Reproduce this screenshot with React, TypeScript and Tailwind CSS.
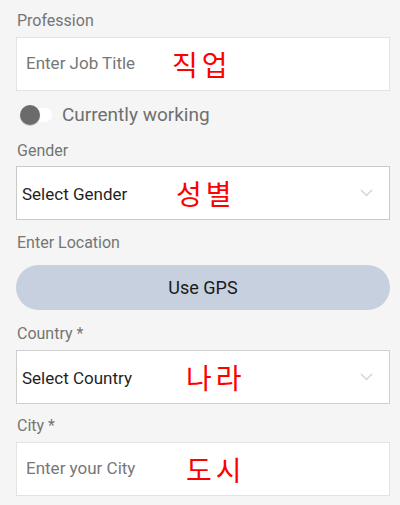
import React, { useState } from 'react';

const Label: React.FC<{ text: string; className?: string }> = ({ text, className = '' }) => (
  <p className={`text-[16px] leading-5 text-[#757575] pl-px ${className}`}>{text}</p>
);

const Note: React.FC<{ text: string; left: string }> = ({ text, left }) => (
  <span
    className={`absolute top-1/2 -translate-y-1/2 ${left} text-[28px] leading-none tracking-[4px] text-[#ff0000]`}
    style={{ fontFamily: '"Noto Sans CJK KR", sans-serif' }}
  >
    {text}
  </span>
);

const Chevron = () => (
  <svg className="absolute right-[16px] top-1/2 -translate-y-1/2" width="13" height="8" viewBox="0 0 13 8" fill="none">
    <polyline points="1,1 6.5,6.5 12,1" stroke="#c9cedb" strokeWidth="1.2" />
  </svg>
);

const App: React.FC = () => {
  const [working, setWorking] = useState(false);

  return (
    <div className="min-h-[505px] w-[400px] bg-[#f4f5f4] pl-4 pr-[10px] pt-[11px]" style={{ fontFamily: 'Roboto, "Noto Sans", sans-serif' }}>
      {/* Profession */}
      <Label text="Profession" className="mb-[6px]" />
      <div className="relative h-[54px] bg-white border border-[#e2e4e2] flex items-center pl-[9px]">
        <span className="text-[17px] text-[#777777]">Enter Job Title</span>
        <Note text="직업" left="left-[155px]" />
      </div>

      {/* Toggle */}
      <div className="mt-[9px] h-[30px] flex items-center">
        <button
          onClick={() => setWorking(!working)}
          className="relative w-[32px] h-[14px] ml-[4px] rounded-full bg-white"
        >
          <span className="absolute left-0 top-1/2 -translate-y-1/2 w-[20px] h-[20px] rounded-full bg-[#6b6b6b] shadow-[0_1px_1px_rgba(0,0,0,0.2)]" />
        </button>
        <span className="ml-[10px] text-[19px] text-[#6f6f6f]">Currently working</span>
      </div>

      {/* Gender */}
      <Label text="Gender" className="mt-[11px] mb-[5px]" />
      <div className="relative h-[54px] bg-white border border-[#c9c9c9] flex items-center pl-[5px]">
        <span className="text-[17px] text-[#1f1f1f] translate-y-[2px]">Select Gender</span>
        <Note text="성별" left="left-[159px]" />
        <Chevron />
      </div>

      {/* Location */}
      <Label text="Enter Location" className="mt-[13px] mb-[12px]" />
      <button className="w-full h-[45px] rounded-full bg-[#c7d0df] text-[18px] text-[#1a1a1a]">Use GPS</button>

      {/* Country */}
      <Label text="Country *" className="mt-[14px] mb-[6px]" />
      <div className="relative h-[54px] bg-white border border-[#cfcfcf] flex items-center pl-[5px]">
        <span className="text-[17px] text-[#1f1f1f] translate-y-[2px]">Select Country</span>
        <Note text="나라" left="left-[169px]" />
        <Chevron />
      </div>

      {/* City */}
      <Label text="City *" className="mt-[12px] mb-[6px]" />
      <div className="relative h-[54px] bg-white border border-[#e2e4e2] flex items-center pl-[9px]">
        <span className="text-[17px] text-[#777777]">Enter your City</span>
        <Note text="도시" left="left-[169px]" />
      </div>
    </div>
  );
};

export default App;
